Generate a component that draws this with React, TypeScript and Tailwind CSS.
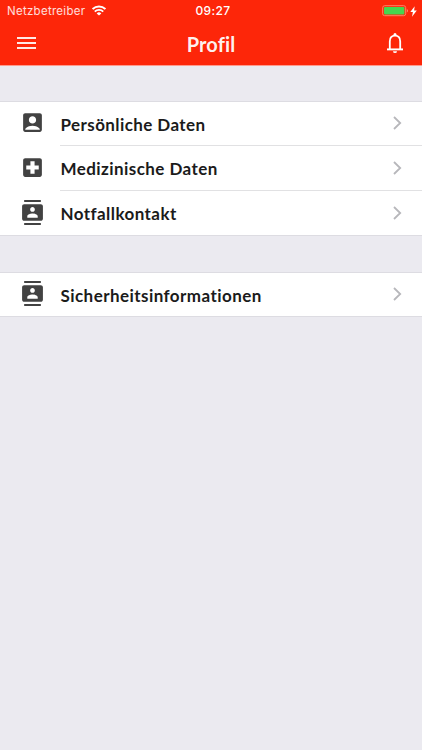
import type { IconType } from 'react-icons'
import { MdAccountBox, MdContacts, MdLocalHospital } from 'react-icons/md'

type MenuItem = {
  label: string
  icon: IconType
  iconOffset: string
  height: string
  text: string
}

const profileItems: MenuItem[] = [
  { label: 'Persönliche Daten', icon: MdAccountBox, iconOffset: 'mt-2', height: 'h-[43px]', text: 'tracking-[0.41px]' },
  { label: 'Medizinische Daten', icon: MdLocalHospital, iconOffset: 'mt-[9px]', height: 'h-11', text: 'tracking-[0.43px]' },
  { label: 'Notfallkontakt', icon: MdContacts, iconOffset: 'mt-[9px]', height: 'h-11', text: 'tracking-[0.43px]' },
]

const infoItems: MenuItem[] = [
  { label: 'Sicherheitsinformationen', icon: MdContacts, iconOffset: 'mt-2', height: 'h-[43px]', text: 'tracking-[0.44px]' },
]

function StatusBar() {
  return (
    <div className="grid h-[22px] grid-cols-3 items-center pl-[7px] pr-[5px] font-['Inter',sans-serif] text-[11.5px] leading-none text-white">
      <div className="flex items-center gap-[7px]">
        <span className="pt-[2px] tracking-[0.28px] text-white/85">Netzbetreiber</span>
        <svg width="14" height="11" viewBox="0 0 14 11" fill="none" stroke="white" strokeWidth="1.9" className="mb-px">
          <path d="M0.6 4.1a9.1 9.1 0 0 1 12.8 0" />
          <path d="M2.8 6.6a5.9 5.9 0 0 1 8.4 0" />
          <path d="M7 10.6L4.7 8.4a3.2 3.2 0 0 1 4.6 0z" fill="white" stroke="none" />
        </svg>
      </div>
      <span className="pl-[2px] text-center text-[12px] font-medium tracking-[0.4px]">09:27</span>
      <div className="flex items-center justify-end gap-[1.5px]">
        <svg width="27" height="12" viewBox="0 0 27 12">
          <rect x="0.7" y="0.7" width="23" height="10" rx="2" fill="none" stroke="#ff8068" strokeWidth="1" />
          <rect x="2" y="2" width="20.4" height="7.4" rx="0.8" fill="#45d64f" />
          <path d="M24.8 3.9c1.7.6 1.7 3 0 3.6z" fill="#ff8068" />
        </svg>
        <svg width="7" height="11" viewBox="0 0 7 11" fill="white">
          <path d="M4.7 0.2L0.3 6.1h2.6L2 10.8 6.8 4.5H4.1z" />
        </svg>
      </div>
    </div>
  )
}

function NavBar() {
  return (
    <div className="grid h-[43px] grid-cols-3 items-center pl-[17px] pr-[17px]">
      <button aria-label="Menu" className="mb-px flex w-[19px] flex-col gap-[3px]">
        <span className="h-[2px] w-full bg-white/90"></span>
        <span className="h-[2px] w-full bg-white/90"></span>
        <span className="h-[2px] w-full bg-white/90"></span>
      </button>
      <h1 className="text-center text-[20px] font-bold leading-6 tracking-[0.1px] text-white/95">Profil</h1>
      <button aria-label="Notifications" className="mb-[2px] justify-self-end">
        <svg width="20" height="22" viewBox="0 0 20 22" fill="none" stroke="white" strokeWidth="1.8">
          <path d="M4.8 17.2V9.4C4.8 5.8 6.8 3.7 10 3.7s5.2 2.1 5.2 5.7v7.8" />
          <path d="M2 17.4h16" strokeWidth="1.9" />
          <circle cx="10" cy="2.4" r="1.5" fill="white" stroke="none" />
          <path d="M8 19.2h4a2 1.9 0 0 1-4 0z" fill="white" stroke="none" />
        </svg>
      </button>
    </div>
  )
}

function MenuList({ items }: { items: MenuItem[] }) {
  return (
    <ul className="border-y border-[#dddce2] bg-white">
      {items.map((item, index) => (
        <li key={item.label} className="flex pl-5">
          <item.icon size={25} color="#424242" className={`shrink-0 ${item.iconOffset}`} />
          <div className={`ml-[15px] flex-1 ${index < items.length - 1 ? 'border-b border-[#e1e1e3]' : ''}`}>
            <div className={`flex items-center justify-between pr-[20px] ${item.height}`}>
              <span className={`pl-[0.5px] pt-[2px] text-[17px] font-bold leading-6 text-[#1b1b1b] ${item.text}`}>
                {item.label}
              </span>
              <svg width="9" height="14" viewBox="0 0 9 14" fill="none" stroke="#b7b7bb" strokeWidth="1.8" className="mb-px">
                <path d="M1 1l6.2 6L1 13" />
              </svg>
            </div>
          </div>
        </li>
      ))}
    </ul>
  )
}

export default function App() {
  return (
    <div className="min-h-screen bg-[#ebeaf0] font-['Lato',sans-serif]">
      <header className="border-b border-[#ff9a8c] bg-[#fd2609]">
        <StatusBar />
        <NavBar />
      </header>
      <main className="flex flex-col gap-9 pt-[35px]">
        <MenuList items={profileItems} />
        <MenuList items={infoItems} />
      </main>
    </div>
  )
}
